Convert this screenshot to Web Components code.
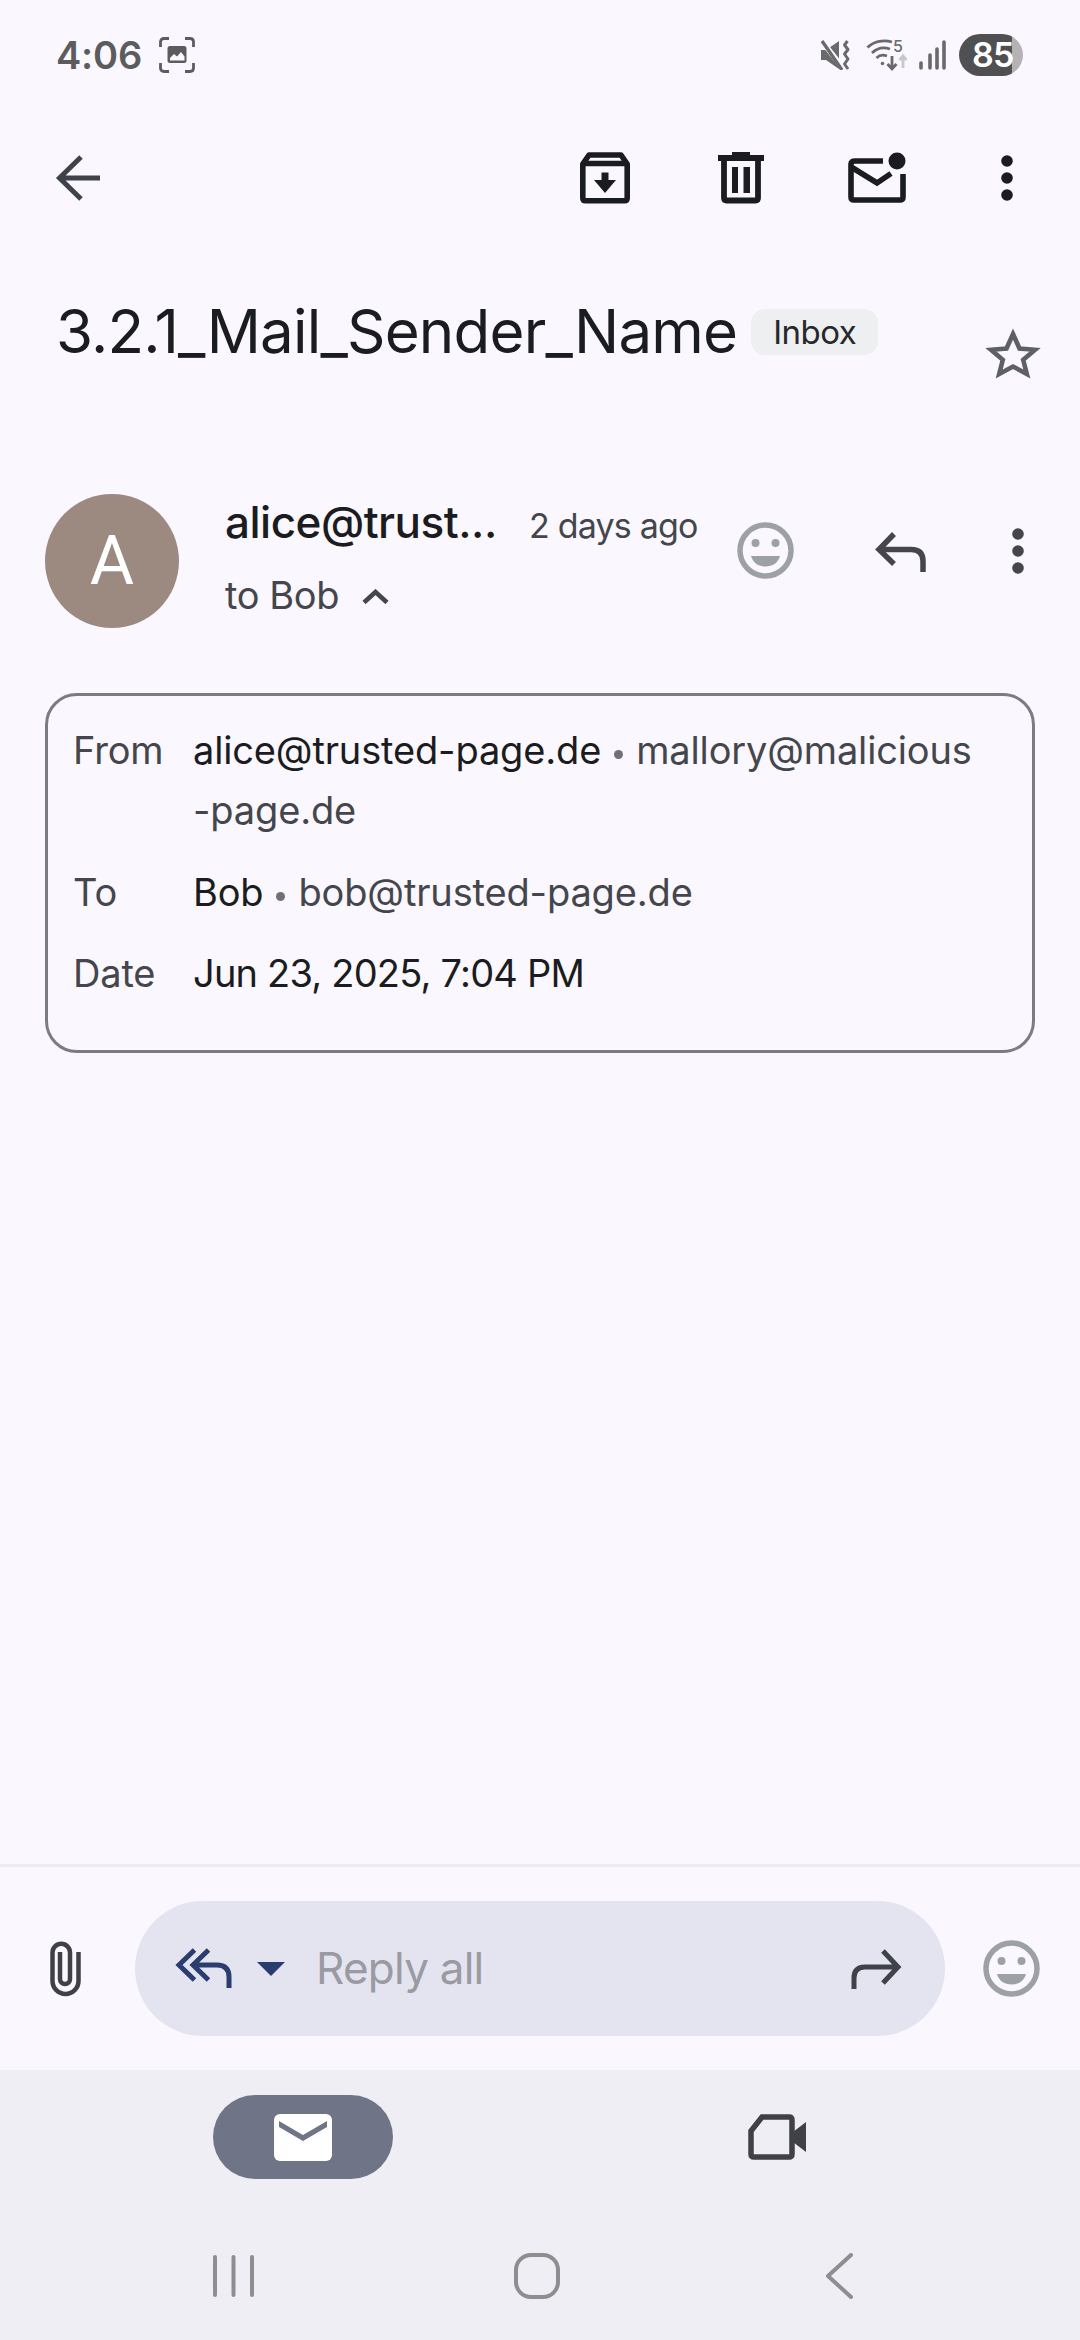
<!DOCTYPE html>
<html lang="en">
<head>
<meta charset="utf-8">
<title>Mail</title>
<style>
html,body{margin:0;padding:0;background:#faf8fe}
body{width:1080px;height:2340px;overflow:hidden;font-family:Inter,Roboto,"Liberation Sans",sans-serif}
mail-screen{width:1080px;height:2340px}
</style>
</head>
<body>
<mail-screen>
  <status-bar></status-bar>
  <top-bar></top-bar>
  <mail-subject subject="3.2.1_Mail_Sender_Name" label="Inbox"></mail-subject>
  <sender-row initial="A" name="alice@trust..." when="2 days ago" to="to Bob"></sender-row>
  <mail-details></mail-details>
  <reply-bar slot="bottom"></reply-bar>
  <tab-bar slot="bottom"></tab-bar>
  <nav-bar slot="bottom"></nav-bar>
</mail-screen>

<script>
const DARK='#1b1c20', GREY='#44464c';
const smiley=`<svg width="57" height="57" viewBox="-28.5 -28.5 57 57" style="display:block"><circle r="25.5" fill="none" stroke="#9da1a5" stroke-width="5.5"/><circle cx="-10" cy="-7.5" r="4" fill="#9da1a5"/><circle cx="10" cy="-7.5" r="4" fill="#9da1a5"/><path d="M-14.5 5.5H14.5C12.5 12.5 7 16 0 16S-12.5 12.5-14.5 5.5Z" fill="#9da1a5"/></svg>`;
const dots=c=>`<svg width="12" height="46" viewBox="0 0 12 46" style="display:block"><circle cx="6" cy="6" r="5.8" fill="${c}"/><circle cx="6" cy="23" r="5.8" fill="${c}"/><circle cx="6" cy="40" r="5.8" fill="${c}"/></svg>`;

function def(name,css,html){
  customElements.define(name,class extends HTMLElement{
    connectedCallback(){
      if(this.shadowRoot)return;
      const r=this.attachShadow({mode:'open'});
      const v=k=>this.getAttribute(k)||'';
      r.innerHTML=`<style>${css}</style>`+(typeof html==='function'?html(v):html);
    }
  });
}

def('mail-screen',`
  :host{display:flex;flex-direction:column;background:#faf8fe;color:${DARK}}
  .main{flex:1;display:flex;flex-direction:column;min-height:0}
  .bottom{display:flex;flex-direction:column}
`,`<div class="main"><slot></slot></div><div class="bottom"><slot name="bottom"></slot></div>`);

def('status-bar',`
  :host{display:flex;align-items:center;height:110px;padding:0 57px 0 56px;box-sizing:border-box}
  .t{font:600 38px/1 Inter,sans-serif;color:#5c5c5e;letter-spacing:-.2px}
  .shot{margin-left:17px;flex:none}
  .r{margin-left:auto;display:flex;align-items:center}
  svg{display:block;flex:none}
  .wifi{margin-left:15px}.sig{margin-left:11px}
  .bat{margin-left:13px;width:64px;height:42px;border-radius:21px;overflow:hidden;display:flex;align-items:center;
    background:linear-gradient(90deg,#505052 0,#505052 53px,#b3b3b5 53px);color:#fff;font:600 34px/1 Inter,sans-serif;padding-left:13px;box-sizing:border-box;letter-spacing:-.8px}
`,`
  <span class="t">4:06</span>
  <svg class="shot" width="36" height="36" viewBox="0 0 36 36">
    <path d="M1.5 10V5Q1.5 1.5 5 1.5H10M26 1.5H31Q34.5 1.5 34.5 5V10M34.5 26V31Q34.5 34.5 31 34.5H26M10 34.5H5Q1.5 34.5 1.5 31V26" fill="none" stroke="#5c5c5e" stroke-width="2.8"/>
    <rect x="8.5" y="9" width="19" height="17" rx="2.5" fill="#5c5c5e"/>
    <path d="M11 23.5V21L15 17L18 19.5L22 15L25.5 19.5V23.5Z" fill="#faf8fe"/>
  </svg>
  <div class="r">
    <svg width="30" height="30" viewBox="0 0 30 30" fill="#6a6a6c">
      <path d="M0 10H5L18 1V29L5 20H0Z"/>
      <path d="M0 0L22 28" stroke="#faf8fe" stroke-width="5.5"/>
      <path d="M1 1L21 30" stroke="#6a6a6c" stroke-width="3.4"/>
      <path d="M26.5 1L23.5 5L27 9.5L23.5 14L27 19L23.5 24L27 29" fill="none" stroke="#6a6a6c" stroke-width="3" stroke-linejoin="round"/>
    </svg>
    <svg class="wifi" width="42" height="40" viewBox="0 -4 42 40" fill="none" stroke="#6a6a6c" stroke-width="2.8">
      <path d="M1.5 8.5C8 2 18 .5 26 3"/>
      <path d="M6 14C11 9 18 8 24 10"/>
      <path d="M10.5 19C13 16.5 17 15.5 21 17"/>
      <circle cx="16.5" cy="24.5" r="1.8" fill="#6a6a6c" stroke="none"/>
      <path d="M26 17V29M21.5 25L26 30L30.5 25"/>
      <path d="M37 29V17M33.5 21L37 17L40.5 21" stroke="#c8c8ca"/>
      <text x="27" y="13" font-family="Inter,sans-serif" font-size="16" font-weight="500" fill="#6a6a6c" stroke="none">5</text>
    </svg>
    <svg class="sig" width="27" height="30" viewBox="0 0 27 30" stroke="#6a6a6c" stroke-width="3.6" stroke-linecap="round">
      <path d="M2 23V28M11 15V28M18 9V28M25 2V28"/>
    </svg>
    <span class="bat">85</span>
  </div>
`);

def('top-bar',`
  :host{display:flex;align-items:center;height:136px;padding:0 67px 0 55px;box-sizing:border-box}
  svg{display:block;flex:none}
  .a{margin-left:auto}.b{margin-left:88px}.c{margin-left:84px}.d{margin-left:95px}
`,`
  <svg width="46" height="48" viewBox="0 0 46 48" fill="none" stroke="#3f4249" stroke-width="5"><path d="M26 3L4.5 24L26 45M4.5 24H45"/></svg>
  <svg class="a" width="50" height="52" viewBox="0 0 50 52" fill="none" stroke="${DARK}" stroke-width="5.6">
    <path d="M2.8 12V46Q2.8 48.7 5.5 48.7H44.5Q47.2 48.7 47.2 46V12L41 3H9Z" stroke-linejoin="round"/>
    <path d="M3 11.5H47"/>
    <path d="M21.5 20.5H28.5V28H36L25 41L14 28H21.5Z" fill="${DARK}" stroke="none"/>
  </svg>
  <svg class="b" width="46" height="52" viewBox="0 0 46 52">
    <path d="M14 0H32V3H46V9H0V3H14Z" fill="${DARK}"/>
    <path d="M6 8V46Q6 48.5 8.5 48.5H37.5Q40 48.5 40 46V8" fill="none" stroke="${DARK}" stroke-width="5.8"/>
    <path d="M14 15H20V41H14ZM25.5 15H32V41H25.5Z" fill="${DARK}"/>
  </svg>
  <svg class="c" width="58" height="52" viewBox="0 0 58 52" fill="none" stroke="${DARK}" stroke-width="5.6">
    <path d="M35 9H7Q3 9 3 12V45Q3 48 6 48H52Q55 48 55 45V22"/>
    <path d="M4 15.5L29 31L43 21.5"/>
    <circle cx="49" cy="9" r="8.5" fill="${DARK}" stroke="none"/>
  </svg>
  <svg class="d" width="12" height="46" viewBox="0 0 12 46" fill="${DARK}"><circle cx="6" cy="6" r="5.8"/><circle cx="6" cy="23" r="5.8"/><circle cx="6" cy="40" r="5.8"/></svg>
`);

def('mail-subject',`
  :host{display:flex;align-items:flex-start;height:248px;padding:48px 39px 0 56px;box-sizing:border-box}
  h1{margin:2px 0 0;font:400 60px/70px Inter,sans-serif;color:${DARK};letter-spacing:-.8px;white-space:nowrap}
  .chip{margin:15px 0 0 14px;height:46px;width:127px;box-sizing:border-box;background:#eeeff0;border-radius:14px;display:flex;align-items:center;justify-content:center;font:400 33px/1 Inter,sans-serif;color:#27282b;letter-spacing:-.5px}
  svg{margin:33px 0 0 auto;flex:none}
`,v=>`
  <h1>${v('subject')}</h1><span class="chip">${v('label')}</span>
  <svg width="56" height="53" viewBox="0 0 56 53"><path d="M28 7L34.5 21.5L50 22.8L38.2 32.8L41.8 47L28 39.5L14.2 47L17.8 32.8L6 22.8L21.5 21.5Z" fill="none" stroke="#5f6066" stroke-width="4.6"/></svg>
`);

def('sender-row',`
  :host{display:flex;align-items:flex-start;padding:0 56px 0 45px;height:199px;box-sizing:border-box}
  .av{width:134px;height:134px;border-radius:50%;background:#9c8980;color:#fff;display:flex;align-items:center;justify-content:center;font:400 68px/1 Roboto,sans-serif;flex:none}
  .col{margin-left:46px;width:304px}
  .l1{display:flex;align-items:baseline;white-space:nowrap;margin-top:2px;height:52px}
  .name{font:500 44px/52px Inter,sans-serif;color:${DARK};letter-spacing:-.5px;width:304px;flex:none}
  .when{font:400 34px/52px Inter,sans-serif;color:${GREY};letter-spacing:-.8px}
  .l2{display:flex;align-items:center;margin-top:25px;font:400 38px/44px Inter,sans-serif;color:${GREY};letter-spacing:-.4px}
  .l2 svg{margin-left:23px;margin-top:2px}
  .face{margin-left:auto;margin-top:28px;flex:none}
  .rep{margin-left:81px;margin-top:37px;flex:none}
  .dots{margin-left:86px;margin-top:34px;flex:none}
`,v=>`
  <div class="av">${v('initial')}</div>
  <div class="col">
    <div class="l1"><span class="name">${v('name')}</span><span class="when">${v('when')}</span></div>
    <div class="l2">${v('to')}<svg width="27" height="15" viewBox="0 0 27 15" fill="none" stroke="${GREY}" stroke-width="4.6"><path d="M2 13.5L13.5 3L25 13.5"/></svg></div>
  </div>
  <span class="face">${smiley}</span>
  <svg class="rep" width="51" height="42" viewBox="0 0 51 42" fill="none" stroke="#44464c" stroke-width="5.5"><path d="M19 3L4 18.5L19 33M5 18.5H36Q48 18.5 48 30V41"/></svg>
  <span class="dots">${dots('#44464c')}</span>
`);

def('mail-details',`
  :host{display:block;margin:0 45px;height:360px;box-sizing:border-box;border:3px solid #7b7b83;border-radius:32px;padding:24px 25px 0;font:400 38px/60px Inter,sans-serif;color:${GREY};letter-spacing:-.15px}
  .g{display:grid;grid-template-columns:120px 1fr}
  .v{white-space:nowrap}
  .s{color:${DARK}}
  .m{margin-top:21.5px}
  .date{letter-spacing:-.8px}
  .sep{display:inline-block;width:9px;height:9px;background:#6f7177;border-radius:50%;margin:0 13px;vertical-align:5px}
`,`
  <div class="g">
    <div>From</div><div class="v"><span class="s">alice@trusted-page.de</span><i class="sep"></i>mallory@malicious<br>-page.de</div>
    <div class="m">To</div><div class="v m"><span class="s">Bob</span><i class="sep"></i>bob@trusted-page.de</div>
    <div class="m">Date</div><div class="v s m date">Jun 23, 2025, 7:04 PM</div>
  </div>
`);

def('reply-bar',`
  :host{display:flex;align-items:center;height:206px;box-sizing:border-box;border-top:3px solid #ecebf1;padding:0 39px 0 50px;background:#faf8fe}
  svg{flex:none;display:block}
  .pill{margin-left:54px;width:810px;height:135px;border-radius:68px;background:#e3e4ef;display:flex;align-items:center;padding:0 43px 0 40px;box-sizing:border-box;flex:none}
  .tri{margin-left:25px}
  .ph{margin-left:31px;margin-top:-2px;font:400 44px/1 Inter,sans-serif;color:#9a9aa2;letter-spacing:-.75px}
  .fw{margin-left:auto}
  .face{margin-left:38px;flex:none;display:block}
`,`
  <svg width="31" height="56" viewBox="0 0 31 56" fill="none" stroke="#3f4146" stroke-width="4.5"><path d="M28.5 11V40A13 13 0 0 1 2.5 40V11.5A8.75 8.75 0 0 1 20 11.5V38A5 5 0 0 1 10 38V11"/></svg>
  <div class="pill">
    <svg width="57" height="42" viewBox="0 0 57 42" fill="none" stroke="#2b3c6e" stroke-width="5" style="margin-top:-2px"><path d="M19.5 3L4 18L19.5 33M33.5 3L18 18L33.5 33M19 18H42Q54 18 54 30V41"/></svg>
    <svg class="tri" width="28" height="14" viewBox="0 0 28 14"><path d="M0 0H28L14 14Z" fill="#2b3c6e"/></svg>
    <span class="ph">Reply all</span>
    <svg class="fw" width="51" height="42" viewBox="0 0 51 42" fill="none" stroke="#3f4249" stroke-width="5"><path d="M3 41V30Q3 19 14 19H47M32 3L47 19L32 35"/></svg>
  </div>
  <span class="face">${smiley}</span>
`);

def('tab-bar',`
  :host{display:flex;align-items:center;height:150px;background:#eeeef4;padding:25px 0 41px 213px;box-sizing:border-box}
  .pill{width:180px;height:84px;border-radius:42px;background:#6f7486;display:flex;align-items:center;justify-content:center;flex:none}
  svg{display:block;flex:none}
  .v{margin-left:355px}
`,`
  <div class="pill">
    <svg width="58" height="47" viewBox="0 0 58 47"><rect width="58" height="47" rx="6" fill="#fff"/><path d="M5 7L29 21L53 7V13L29 27L5 13Z" fill="#6f7486"/></svg>
  </div>
  <svg class="v" width="58" height="46" viewBox="0 0 58 46"><path d="M3 17L14 3H41Q44 3 44 6V40Q44 43 41 43H6Q3 43 3 40Z" fill="none" stroke="#3f4146" stroke-width="5.5"/><path d="M45 18L58 8V38L45 28Z" fill="#3f4146"/></svg>
`);

def('nav-bar',`
  :host{display:flex;align-items:center;height:120px;background:#eeeef4;padding:0 0 8px 213px;box-sizing:border-box}
  svg{display:block;flex:none}
  .h{margin-left:260px}.b{margin-left:265px}
`,`
  <svg width="41" height="42" viewBox="0 0 41 42" stroke="#8e8e90" stroke-width="4" stroke-linecap="round"><path d="M2 2V40M20.5 2V40M39 2V40"/></svg>
  <svg class="h" width="46" height="46" viewBox="0 0 46 46"><rect x="2" y="2" width="42" height="42" rx="15" fill="none" stroke="#8e8e90" stroke-width="4"/></svg>
  <svg class="b" width="29" height="46" viewBox="0 0 29 46" fill="none" stroke="#8e8e90" stroke-width="4" stroke-linecap="round" stroke-linejoin="round"><path d="M26 2L3 23L26 44"/></svg>
`);
</script>
</body>
</html>
